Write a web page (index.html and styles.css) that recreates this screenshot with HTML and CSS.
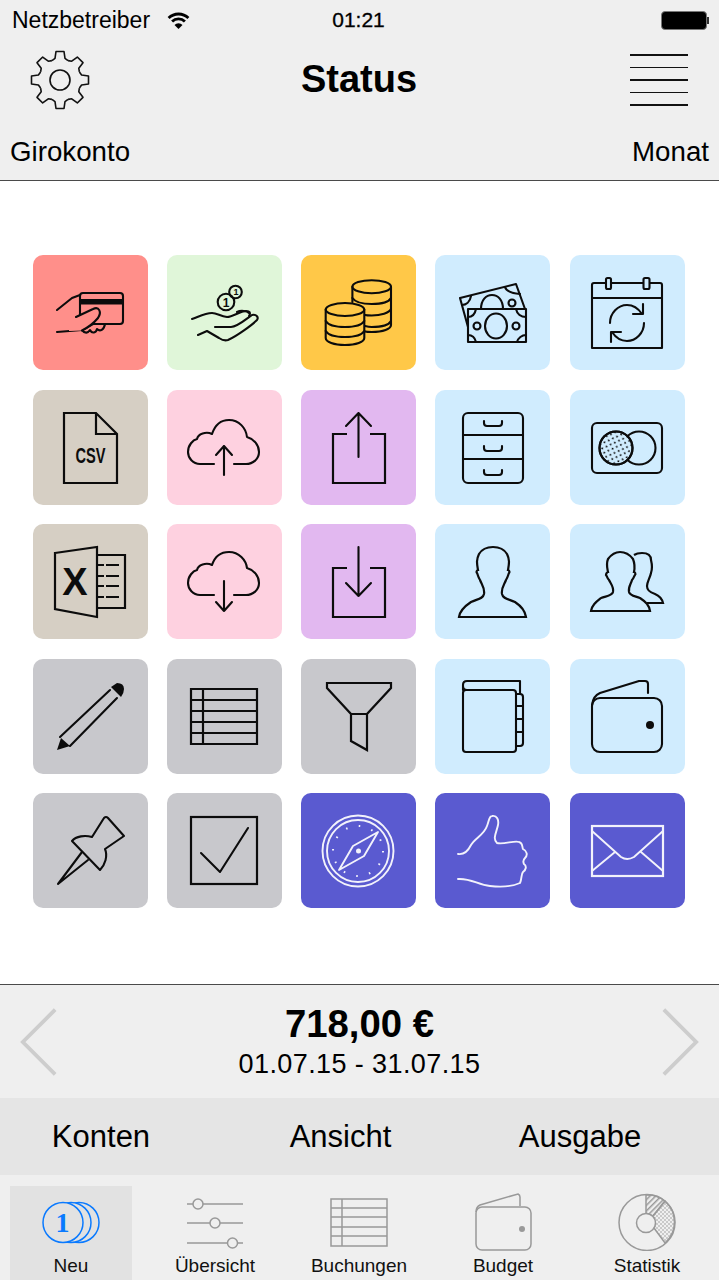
FILE: index.html
```html
<!DOCTYPE html>
<html lang="de">

  <head>
    <meta charset="UTF-8">
    <meta name="viewport" content="width=device-width, initial-scale=1.0">
    <title>Status</title>
    <link rel="stylesheet" href="styles.css">
  </head>

  <body>
    <header class="top">
      <div class="statusbar">
        <div class="carrier">
          <span>Netzbetreiber</span>
          <svg class="wifi" viewBox="0 0 23 18">
            <path d="M1.6 7.1A14 14 0 0 1 21.4 7.1M5.1 10.6A9 9 0 0 1 17.9 10.6"/>
            <path class="solid" d="M11.5 18L7.5 14A5.6 5.6 0 0 1 15.5 14Z"/>
          </svg>
        </div>
        <div class="clock">01:21</div>
        <div class="battery"><div class="battery-body"></div><div class="battery-nub"></div></div>
      </div>

      <div class="titlerow">
        <svg class="gear" viewBox="-30 -30 60 60">
          <defs>
            <path id="tooth" d="M-8 -19.4L-5 -21.6L-4 -28.5H4L5 -21.6L8 -19.4"/>
          </defs>
          <use href="#tooth"/>
          <use href="#tooth" transform="rotate(45)"/>
          <use href="#tooth" transform="rotate(90)"/>
          <use href="#tooth" transform="rotate(135)"/>
          <use href="#tooth" transform="rotate(180)"/>
          <use href="#tooth" transform="rotate(225)"/>
          <use href="#tooth" transform="rotate(270)"/>
          <use href="#tooth" transform="rotate(315)"/>
          <circle r="10"/>
        </svg>
        <h1 class="title">Status</h1>
        <div class="menu"><span></span><span></span><span></span><span></span><span></span></div>
      </div>

      <div class="labels">
        <span>Girokonto</span>
        <span>Monat</span>
      </div>
    </header>

    <main class="board">
      <div class="tiles">
        <!-- row 1 -->
        <div class="tile red">
          <svg class="icon" viewBox="0 0 115 115">
            <rect x="47" y="38" width="43" height="31" rx="3"/>
            <rect class="solid" x="47" y="44" width="43" height="5.500"/>
            <path d="M24 55L39 43L47 40M24 77L49 75"/>
            <path class="fill-red" d="M49 75C52 79 55 78 57 75C59 79 63 78 64 74C67 77 71 75 72 69H60L49 75Z"/>
            <path class="fill-red" d="M43 62L60 54C66 51 69 57 65 63C60 69 54 73 49 75.500L36 76V66Z" stroke="none"/>
            <path d="M43 62L60 54C66 51 69 57 65 63C60 69 54 73 49 75.500"/>
          </svg>
        </div>
        <div class="tile green">
          <svg class="icon" viewBox="0 0 115 115">
            <circle cx="59" cy="47" r="8.3"/>
            <circle cx="68.500" cy="37" r="6.300"/>
            <text class="digit" x="59" y="51.500" text-anchor="middle">1</text>
            <text class="digit small" x="69" y="40" text-anchor="middle">1</text>
            <path d="M25 64C31 62 38 58 45 58C50 58 53 61 60 62C66 62 73 56 79 56C83 56 84 58 82 61"/>
            <path d="M48 72H64C70 72 78 65 85 60C89 59 92 62 90 65C85 70 70 81 61 85C58 86 55 85 52 83L40 76L31 80"/>
            <path d="M70 57C74 55 80 56 82 58"/>
          </svg>
        </div>
        <div class="tile orange">
          <svg class="icon" viewBox="0 0 115 115">
            <ellipse cx="70.700" cy="31.700" rx="19.300" ry="6.500"/>
            <path d="M51.400 31.700V47M90 31.700V70C90 74 82 77 70.700 77C68 77 66 77 64 76.500"/>
            <path d="M51.400 43C54 47 62 49 70.700 49C80 49 88 47 90 43M64 60C66 60.500 68 60.500 70.700 60.500C80 60.500 88 58 90 54M64 71C66 71.500 68 72 70.700 72C80 72 88 70 90 66"/>
            <ellipse cx="44" cy="54.500" rx="19.300" ry="6.500"/>
            <path d="M24.700 54.500V83C24.700 87 33 90 44 90C55 90 63.300 87 63.300 83V54.500"/>
            <path d="M24.700 66C27 70 35 72 44 72C53 72 61 70 63.300 66M24.700 76C27 80 35 82 44 82C53 82 61 80 63.300 76"/>
          </svg>
        </div>
        <div class="tile blue">
          <svg class="icon" viewBox="0 0 115 115">
            <path d="M33 72L25 43L81 29L90 54"/>
            <path d="M46 54C46 45 51 40 57 40C63 40 68 45 68 54"/>
            <circle cx="77" cy="48" r="3.500"/>
            <path d="M27 50C31 50 35 47 36 41M70 32C71 36 75 38 85 39"/>
            <rect x="33" y="54" width="58" height="33"/>
            <ellipse cx="61" cy="71" rx="11" ry="12.500"/>
            <circle cx="42" cy="71" r="3.500"/>
            <circle cx="81" cy="71" r="3.500"/>
            <path d="M33 62C37 62 40 59 41 54M81 54C82 59 86 62 91 62M33 80C37 80 40 83 41 87M91 80C87 80 83 83 82 87"/>
          </svg>
        </div>
        <div class="tile blue">
          <svg class="icon" viewBox="0 0 115 115">
            <path d="M36 28H24Q22 28 22 30V93H92V30Q92 28 90 28H80M41 28H73M22 43H92"/>
            <rect x="36" y="23" width="5" height="11" rx="1.500"/>
            <rect x="73.500" y="23" width="6" height="11" rx="1.500"/>
            <path d="M40 68C40 58 48 50 57 50C63 50 68 53 72 59M74 68C74 78 66 86 57 86C51 86 46 83 42 77"/>
            <path d="M73 49V59H63M41 87V77H51"/>
          </svg>
        </div>

        <!-- row 2 -->
        <div class="tile tan">
          <svg class="icon" viewBox="0 0 115 115">
            <path class="sharp" d="M31 23H63L84 44V93H31ZM63 23V44H84"/>
            <text class="csv" x="57.500" y="73" text-anchor="middle" textLength="30" lengthAdjust="spacingAndGlyphs">CSV</text>
          </svg>
        </div>
        <div class="tile pink">
          <svg class="icon" viewBox="0 0 115 115">
            <path d="M47 74H33C26 74 21 68 21 62C21 55 26 50 30 49C31 44 39 41 45 44C48 35 54 30 62 30C72 30 79 38 80 47C87 49 92 55 92 62C92 69 86 74 79 74H67"/>
            <path d="M57 85V56M49 65L57 56L65 65"/>
          </svg>
        </div>
        <div class="tile purple">
          <svg class="icon" viewBox="0 0 115 115">
            <path class="sharp" d="M46 44H32V93H84V44H69"/>
            <path d="M57.500 67V23M45 36L57.500 23L70 36"/>
          </svg>
        </div>
        <div class="tile blue">
          <svg class="icon" viewBox="0 0 115 115">
            <rect x="28" y="23" width="60" height="70" rx="5"/>
            <path d="M28 45H88M28 69H88"/>
            <path d="M49 31V33Q49 36 52 36H64Q67 36 67 33V31M49 56V58Q49 61 52 61H64Q67 61 67 58V56M49 80V82Q49 85 52 85H64Q67 85 67 82V80"/>
          </svg>
        </div>
        <div class="tile blue">
          <svg class="icon" viewBox="0 0 115 115">
            <defs>
              <pattern id="dots" width="6.500" height="6.500" patternUnits="userSpaceOnUse" patternTransform="rotate(20)">
                <circle class="solid" cx="1.600" cy="1.600" r="1"/>
                <circle class="solid" cx="4.850" cy="4.850" r="1"/>
              </pattern>
            </defs>
            <rect x="22" y="33" width="70" height="50" rx="5"/>
            <circle cx="69" cy="58" r="16.500"/>
            <circle class="fill-blue" cx="46" cy="58" r="16.500"/>
            <circle cx="46" cy="58" r="16.500" fill="url(#dots)"/>
          </svg>
        </div>

        <!-- row 3 -->
        <div class="tile tan">
          <svg class="icon" viewBox="0 0 115 115">
            <path class="sharp" d="M22 29L64 23V93L22 85Z"/>
            <path class="sharp" d="M64 31H92V84H64"/>
            <path class="sharp" d="M65 41H71M73 41H86M65 52H71M73 52H86M65 62H71M73 62H86M65 73H71M73 73H86"/>
            <text class="bigx" x="42" y="71" text-anchor="middle">X</text>
          </svg>
        </div>
        <div class="tile pink">
          <svg class="icon" viewBox="0 0 115 115">
            <path d="M47 71H33C26 71 21 65 21 59C21 52 26 47 30 46C31 41 39 38 45 41C48 32 54 28 62 28C72 28 79 36 80 44C87 46 92 52 92 59C92 66 86 71 79 71H67"/>
            <path d="M57 57V87M49 78L57 87L65 78"/>
          </svg>
        </div>
        <div class="tile purple">
          <svg class="icon" viewBox="0 0 115 115">
            <path class="sharp" d="M46 44H32V93H84V44H69"/>
            <path d="M57.500 23V72M45 59L57.500 72L70 59"/>
          </svg>
        </div>
        <div class="tile blue">
          <svg class="icon" viewBox="0 0 115 115">
            <path class="sharp" d="M24 93C25 86 30 82 36 78C42 75 48 75 49 70C50 64 47 61 45 56C43 53 43 51 42 49C41 48 42 46 43 46C42 40 41 36 44 30C47 25 52 23 58 23C64 23 69 25 72 30C75 36 74 40 73 46C74 46 75 48 74 49C73 51 73 53 71 56C69 61 66 64 67 70C68 75 74 75 80 78C86 82 90 86 91 93Z"/>
          </svg>
        </div>
        <div class="tile blue">
          <svg class="icon" viewBox="0 0 115 115">
            <path class="sharp" d="M64 31C67 29 70 29 72 29C77 29 81 31 81 36C82 40 82 46 81 49C80 54 77 58 77 62C77 66 79 68 85 70C90 72 92 75 93 79H77"/>
            <path class="sharp fill-blue" d="M21 87C22 81 26 78 31 74C36 72 42 72 43 68C44 63 41 60 39 56C37 54 37 52 36 51C36 50 37 48 38 48C37 43 36 40 38 35C41 31 45 28 50 28C56 28 60 31 63 35C65 40 65 43 64 48C65 48 66 50 65 51C64 52 64 54 62 56C61 60 58 63 59 68C60 72 65 72 70 74C76 78 79 81 80 87Z"/>
          </svg>
        </div>

        <!-- row 4 -->
        <div class="tile gray">
          <svg class="icon" viewBox="0 0 115 115">
            <path d="M27 78L77 31M37 87L84 39"/>
            <path class="solid" d="M24 91L28 79L37 87Z"/>
            <path class="solid" d="M78 28L84 24Q91 24 91 30Q91 34 88 38Z"/>
          </svg>
        </div>
        <div class="tile gray">
          <svg class="icon" viewBox="0 0 115 115">
            <path class="sharp" d="M24 30H90V85H24ZM24 41H90M24 52H90M24 63H90M24 74H90M36 30V85"/>
          </svg>
        </div>
        <div class="tile gray">
          <svg class="icon" viewBox="0 0 115 115">
            <path class="sharp" d="M26 24H90V29L66 55V91L50 82V55L26 29ZM50 55H66"/>
          </svg>
        </div>
        <div class="tile blue">
          <svg class="icon" viewBox="0 0 115 115">
            <rect x="28" y="31" width="53" height="62" rx="3"/>
            <path d="M28 31V26Q28 22 32 22H85V35M32 31Q28 31 28 27"/>
            <path d="M81 35H85Q88 35 88 38V84Q88 87 85 87H81M81 47H88M81 60H88M81 73H88"/>
          </svg>
        </div>
        <div class="tile blue">
          <svg class="icon" viewBox="0 0 115 115">
            <rect x="22" y="39" width="70" height="54" rx="8"/>
            <path d="M22 46Q23 37 30 34L69 22H75Q78 22 78 25V34"/>
            <circle class="solid" cx="80" cy="66" r="4"/>
          </svg>
        </div>

        <!-- row 5 -->
        <div class="tile gray">
          <svg class="icon" viewBox="0 0 115 115">
            <path d="M39 48C43 43 52 42 59 44L71 25Q73 23 75 25L91 43L72 56C75 63 72 72 67 77Z"/>
            <path d="M49 59L25 91L55 67"/>
          </svg>
        </div>
        <div class="tile gray">
          <svg class="icon" viewBox="0 0 115 115">
            <rect class="sharp" x="24" y="24" width="66" height="67"/>
            <path d="M34 60L53 79L81 35"/>
          </svg>
        </div>
        <div class="tile indigo">
          <svg class="icon white" viewBox="0 0 115 115">
            <circle cx="57" cy="58" r="35.500"/>
            <circle cx="57" cy="58" r="31"/>
            <circle class="ticks" cx="57" cy="58" r="25"/>
            <path d="M77 39L52 53L38 77L63 63Z"/>
            <circle class="solid" cx="57.500" cy="58" r="2.500"/>
          </svg>
        </div>
        <div class="tile indigo">
          <svg class="icon white" viewBox="0 0 115 115">
            <path d="M23 61C29 62 33 58 36 52C40 45 49 42 52 33C54 28 54 23 57 23C62 22 64 27 63 32C62 38 57 46 62 50C68 52 80 47 84 49C88 50 87 54 88 56C92 58 93 62 90 65C88 67 88 69 89 71C92 73 91 77 88 79C86 81 87 86 85 90C76 94 64 94 55 93C43 92 36 85 23 86"/>
          </svg>
        </div>
        <div class="tile indigo">
          <svg class="icon white" viewBox="0 0 115 115">
            <rect class="sharp" x="22" y="33" width="71" height="50"/>
            <path d="M22 38L51 64Q57 68 64 64L93 38M22 78L45 59M93 78L71 59"/>
          </svg>
        </div>
      </div>
    </main>

    <section class="summary">
      <svg class="chevron" viewBox="0 0 40 72"><path d="M37 2L3 36L37 70"/></svg>
      <div class="amount">
        <div class="amount-value">718,00 €</div>
        <div class="amount-range">01.07.15 - 31.07.15</div>
      </div>
      <svg class="chevron" viewBox="0 0 40 72"><path d="M3 2L37 36L3 70"/></svg>
    </section>

    <nav class="actions">
      <span>Konten</span>
      <span>Ansicht</span>
      <span>Ausgabe</span>
    </nav>

    <nav class="tabs">
      <div class="tab active">
        <svg class="tab-icon" viewBox="0 0 58 58">
          <circle cx="37" cy="29.500" r="20"/>
          <circle cx="29" cy="29.500" r="20"/>
          <circle cx="21" cy="29.500" r="20"/>
          <text class="coin-digit" x="20.500" y="39" text-anchor="middle">1</text>
        </svg>
        <span>Neu</span>
      </div>
      <div class="tab">
        <svg class="tab-icon" viewBox="0 0 58 58">
          <path d="M1 11H57M1 30H57M1 50H57"/>
          <circle class="knob" cx="12" cy="11" r="5"/>
          <circle class="knob" cx="29" cy="30" r="5"/>
          <circle class="knob" cx="46.500" cy="50" r="5"/>
        </svg>
        <span>Übersicht</span>
      </div>
      <div class="tab">
        <svg class="tab-icon" viewBox="0 0 58 58">
          <path d="M1 6H57V53H1ZM1 15H57M1 24H57M1 34H57M1 43H57M12 6V53"/>
        </svg>
        <span>Buchungen</span>
      </div>
      <div class="tab">
        <svg class="tab-icon" viewBox="0 0 58 58">
          <rect x="2" y="14" width="55" height="43" rx="6"/>
          <path d="M2 19Q2 14 6 12L44 1Q46 2 46 4V13"/>
          <circle class="gray-dot" cx="48" cy="36" r="3"/>
        </svg>
        <span>Budget</span>
      </div>
      <div class="tab">
        <svg class="tab-icon" viewBox="0 0 58 58">
          <defs>
            <pattern id="hatch" width="4" height="4" patternUnits="userSpaceOnUse" patternTransform="rotate(45)">
              <rect class="gray-dot" width="1.500" height="4"/>
            </pattern>
            <pattern id="specks" width="4" height="4" patternUnits="userSpaceOnUse">
              <circle class="gray-dot" cx="1" cy="1" r="0.800"/>
              <circle class="gray-dot" cx="3" cy="3" r="0.800"/>
            </pattern>
          </defs>
          <circle cx="29" cy="29.500" r="28"/>
          <path d="M28 2V20L35 23L47 8A28 28 0 0 0 28 2Z" fill="url(#hatch)"/>
          <path d="M47 8L35 23Q38 27 36 35L47 50A28 28 0 0 0 47 8Z" fill="url(#specks)"/>
          <circle class="knob" cx="28" cy="30" r="9.500"/>
        </svg>
        <span>Statistik</span>
      </div>
    </nav>
  </body>

</html>
```

FILE: styles.css
```css
* {
  box-sizing: border-box;
}

body {
  margin: 0;
  width: 719px;
  height: 1280px;
  overflow: hidden;
  display: flex;
  flex-direction: column;
  background: #fff;
  color: #000;
  font-family: "Liberation Sans", Arial, sans-serif;
}

/* header */
.top {
  height: 181px;
  flex: none;
  background: #efefef;
  border-bottom: 1px solid #4a4a4a;
}

.statusbar {
  height: 40px;
  padding: 0 10px 0 8px;
  display: grid;
  grid-template-columns: 1fr auto 1fr;
  align-items: center;
  font-size: 22px;
}

.carrier {
  padding-left: 4px;
  display: flex;
  align-items: center;
  gap: 17px;
  font-size: 23px;
}

.wifi {
  width: 23px;
  height: 18px;
  fill: none;
  stroke: #000;
  stroke-width: 2.8;
}

.wifi .solid {
  fill: #000;
  stroke: none;
}

.clock {
  font-size: 21px;
  -webkit-text-stroke: 0.3px #000;
}

.battery {
  justify-self: end;
  display: flex;
  align-items: center;
}

.battery-body {
  width: 46px;
  height: 19px;
  background: #000;
  border: 1px solid #777;
  border-radius: 4px;
}

.battery-nub {
  width: 2px;
  height: 7px;
  background: #333;
}

.titlerow {
  height: 80px;
  padding: 0 31px 0 30px;
  display: grid;
  grid-template-columns: 1fr auto 1fr;
  align-items: center;
}

.gear {
  width: 60px;
  height: 60px;
  fill: none;
  stroke: #111;
  stroke-width: 1.6;
  stroke-linejoin: round;
}

.title {
  margin: 0 0 2px;
  font-size: 38px;
  font-weight: bold;
}

.menu {
  justify-self: end;
  width: 58px;
  display: flex;
  flex-direction: column;
  gap: 11px;
}

.menu span {
  height: 1.6px;
  background: #111;
}

.labels {
  height: 60px;
  padding: 4px 10px 0;
  display: flex;
  justify-content: space-between;
  align-items: center;
  font-size: 27.7px;
}

/* tile board */
.board {
  flex: 1;
  padding: 74px 0 0 32.5px;
}

.tiles {
  display: grid;
  grid-template-columns: repeat(5, 115px);
  grid-auto-rows: 115px;
  column-gap: 19.25px;
  row-gap: 19.5px;
}

.tile {
  border-radius: 10px;
  color: #0c0c0c;
}

.red { background: #ff8f8a; }
.green { background: #e0f6d9; }
.orange { background: #ffc848; }
.blue { background: #d0ecfe; }
.tan { background: #d6cfc4; }
.pink { background: #fed1e0; }
.purple { background: #e2b8f0; }
.gray { background: #c8c8cc; }
.indigo { background: #5a5ad0; }

.icon {
  display: block;
  width: 115px;
  height: 115px;
  fill: none;
  stroke: currentColor;
  stroke-width: 2.1;
  stroke-linecap: round;
  stroke-linejoin: round;
}

.icon.white {
  color: #f2f2fb;
  stroke-width: 1.9;
}

.icon .sharp {
  stroke-width: 2.2;
  stroke-linecap: butt;
  stroke-linejoin: miter;
}

.icon .fill-blue {
  fill: #d0ecfe;
}

.icon .fill-red {
  fill: #ff8f8a;
}

.icon .solid {
  fill: currentColor;
  stroke: none;
}

.ticks {
  stroke-width: 2 !important;
  stroke-dasharray: 1.600 11.490;
  stroke-linecap: butt;
}

.icon text {
  fill: currentColor;
  stroke: none;
}

.digit {
  font-size: 12px;
  font-weight: bold;
}

.digit.small {
  font-size: 9px;
}

.csv {
  font-size: 22px;
  font-weight: bold;
}

.bigx {
  font-size: 38px;
  font-weight: bold;
}

/* amount panel */
.summary {
  height: 114px;
  flex: none;
  padding: 0 20px;
  background: #efefef;
  border-top: 1px solid #4a4a4a;
  display: flex;
  align-items: center;
  justify-content: space-between;
}

.chevron {
  width: 38px;
  height: 72px;
  fill: none;
  stroke: #cdcdcd;
  stroke-width: 4;
}

.amount {
  text-align: center;
}

.amount-value {
  font-size: 38.3px;
  font-weight: bold;
  line-height: 44px;
}

.amount-range {
  font-size: 27px;
  letter-spacing: 0.4px;
  line-height: 36px;
}

.actions {
  height: 77px;
  flex: none;
  background: #e5e5e5;
  display: grid;
  grid-template-columns: 202px 277px 202px;
  align-items: center;
  text-align: center;
  font-size: 31px;
}

.tabs {
  height: 105px;
  flex: none;
  padding: 11px 10px 0;
  background: #efefef;
  display: grid;
  grid-template-columns: repeat(5, 122px);
  column-gap: 22px;
}

.tab {
  padding-top: 7px;
  display: flex;
  flex-direction: column;
  align-items: center;
  color: #111;
  font-size: 19px;
}

.tab span {
  margin-top: 4px;
}

.tab.active {
  background: #e2e2e2;
}

.tab-icon {
  width: 58px;
  height: 58px;
  fill: none;
  stroke: #999;
  stroke-width: 1.5;
}

.knob {
  fill: #efefef;
}

.gray-dot {
  fill: #999;
  stroke: none;
}

.active .tab-icon {
  stroke: #0a7aff;
}

.active .tab-icon circle {
  fill: #e2e2e2;
}

.coin-digit {
  fill: #0a7aff;
  stroke: none;
  font-family: "Liberation Serif", serif;
  font-size: 28px;
  font-weight: bold;
}
```
